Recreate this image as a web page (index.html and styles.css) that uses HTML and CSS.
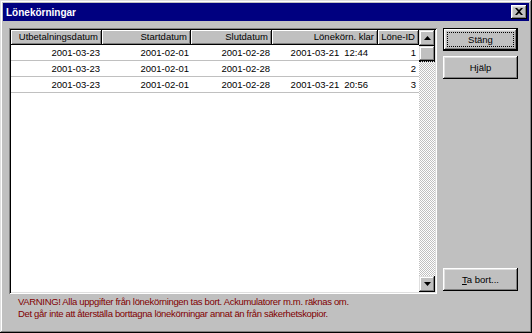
FILE: index.html
```html
<!DOCTYPE html>
<html lang="sv">
<head>
    <meta charset="UTF-8">
    <title>Lönekörningar</title>
    <link rel="stylesheet" href="styles.css">
</head>
<body>
    <div class="window">
        <div class="titlebar">
            <span class="title">Lönekörningar</span>
            <button class="close-btn">
                <svg width="8" height="7" viewBox="0 0 8 7"><path d="M0 0h2l2 2 2-2h2L5 3.5 8 7H6L4 5 2 7H0l3-3.5z" fill="#000"/></svg>
            </button>
        </div>

        <div class="content">
            <div class="listview">
                <div class="list-area">
                    <div class="list-header">
                        <div class="hcell c1">Utbetalningsdatum</div>
                        <div class="hcell c2">Startdatum</div>
                        <div class="hcell c3">Slutdatum</div>
                        <div class="hcell c4">Lönekörn. klar</div>
                        <div class="hcell c5">Löne-ID</div>
                    </div>
                    <div class="row">
                        <div class="cell c1">2001-03-23</div>
                        <div class="cell c2">2001-02-01</div>
                        <div class="cell c3">2001-02-28</div>
                        <div class="cell c4"><span>2001-03-21</span><span>12:44</span></div>
                        <div class="cell c5">1</div>
                    </div>
                    <div class="row">
                        <div class="cell c1">2001-03-23</div>
                        <div class="cell c2">2001-02-01</div>
                        <div class="cell c3">2001-02-28</div>
                        <div class="cell c4"></div>
                        <div class="cell c5">2</div>
                    </div>
                    <div class="row">
                        <div class="cell c1">2001-03-23</div>
                        <div class="cell c2">2001-02-01</div>
                        <div class="cell c3">2001-02-28</div>
                        <div class="cell c4"><span>2001-03-21</span><span>20:56</span></div>
                        <div class="cell c5">3</div>
                    </div>
                </div>
                <div class="scrollbar">
                    <div class="sb-btn">
                        <svg width="7" height="4" viewBox="0 0 7 4"><path d="M3.5 0L7 4H0z" fill="#000"/></svg>
                    </div>
                    <div class="sb-thumb"></div>
                    <div class="sb-track"></div>
                    <div class="sb-btn">
                        <svg width="7" height="4" viewBox="0 0 7 4"><path d="M0 0h7L3.5 4z" fill="#000"/></svg>
                    </div>
                </div>
            </div>

            <div class="buttons">
                <button class="btn default"><span class="focus">Stäng</span></button>
                <button class="btn">Hjälp</button>
                <button class="btn bottom"><u>T</u>a bort...</button>
            </div>

            <p class="warning">
                VARNING! Alla uppgifter från lönekörningen tas bort. Ackumulatorer m.m. räknas om.<br>
                Det går inte att återställa borttagna lönekörningar annat än från säkerhetskopior.
            </p>
        </div>
    </div>
</body>
</html>
```

FILE: styles.css
```css
* {
    margin: 0;
    padding: 0;
    box-sizing: border-box;
}

body {
    font-family: "Liberation Sans", Arial, sans-serif;
    font-size: 9.5px;
    color: #000;
    background: #c0c0c0;
    width: 532px;
    height: 333px;
    overflow: hidden;
}

/* fönsterram */
.window {
    width: 532px;
    height: 333px;
    padding: 3px;
    background: #c0c0c0;
    box-shadow:
        inset -1px -1px #000,
        inset 1px 1px #dfdfdf,
        inset -2px -2px #808080,
        inset 2px 2px #fff;
    display: flex;
    flex-direction: column;
}

.titlebar {
    height: 18px;
    background: #000080;
    display: flex;
    align-items: center;
    justify-content: space-between;
    padding: 0 2px 0 3px;
}

.title {
    color: #fff;
    font-weight: bold;
    font-size: 10px;
}

.close-btn {
    width: 16px;
    height: 14px;
    border: none;
    background: #c0c0c0;
    box-shadow:
        inset -1px -1px #000,
        inset 1px 1px #fff,
        inset -2px -2px #808080,
        inset 2px 2px #dfdfdf;
    display: flex;
    align-items: center;
    justify-content: center;
    padding-bottom: 1px;
}

.content {
    display: grid;
    grid-template-columns: 428px 75px;
    grid-template-rows: 266px auto;
    column-gap: 6px;
    padding: 7px 0 0 6px;
}

/* listvy */
.listview {
    display: flex;
    padding: 2px;
    background: #fff;
    box-shadow:
        inset 1px 1px #808080,
        inset -1px -1px #fff,
        inset 2px 2px #000,
        inset -2px -2px #dfdfdf;
}

.list-area {
    flex: 1;
}

.list-header,
.row {
    display: grid;
    grid-template-columns: 91px 89px 81px 106px 41px;
}

.hcell {
    height: 15px;
    line-height: 14px;
    text-align: right;
    padding-right: 4px;
    background: #c0c0c0;
    box-shadow:
        inset -1px -1px #000,
        inset 1px 1px #fff,
        inset -2px -2px #808080;
}

.row {
    height: 16px;
    border-bottom: 1px solid #c0c0c0;
}

.cell {
    line-height: 15px;
    text-align: right;
    padding-right: 2px;
}

.cell.c4 {
    display: flex;
    justify-content: flex-end;
    gap: 5px;
    padding-right: 10px;
}

.cell.c5 {
    padding-right: 3px;
}

.scrollbar {
    width: 16px;
    display: flex;
    flex-direction: column;
}

.sb-btn,
.sb-thumb {
    width: 16px;
    height: 16px;
    background: #c0c0c0;
    box-shadow:
        inset -1px -1px #000,
        inset 1px 1px #dfdfdf,
        inset -2px -2px #808080,
        inset 2px 2px #fff;
}

.sb-btn {
    display: flex;
    align-items: center;
    justify-content: center;
}

.sb-thumb {
    border-bottom: 1px dotted #000;
}

.sb-track {
    flex: 1;
    background: repeating-conic-gradient(#c0c0c0 0 25%, #fff 0 50%) 0 0 / 2px 2px;
}

/* knappar */
.buttons {
    display: flex;
    flex-direction: column;
    gap: 5px;
}

.btn {
    width: 75px;
    height: 23px;
    border: none;
    background: #c0c0c0;
    font-family: inherit;
    font-size: 9.5px;
    color: #000;
    box-shadow:
        inset -1px -1px #000,
        inset 1px 1px #fff,
        inset -2px -2px #808080,
        inset 2px 2px #dfdfdf;
}

.btn.default {
    border: 1px solid #000;
    padding: 3px;
    display: flex;
}

.btn .focus {
    flex: 1;
    display: flex;
    align-items: center;
    justify-content: center;
    border: 1px dotted #000;
}

.btn.bottom {
    margin-top: auto;
    margin-bottom: 3px;
}

.warning {
    grid-column: 1 / 3;
    color: #800000;
    line-height: 12px;
    letter-spacing: -0.33px;
    padding: 2px 0 0 9px;
}
```
